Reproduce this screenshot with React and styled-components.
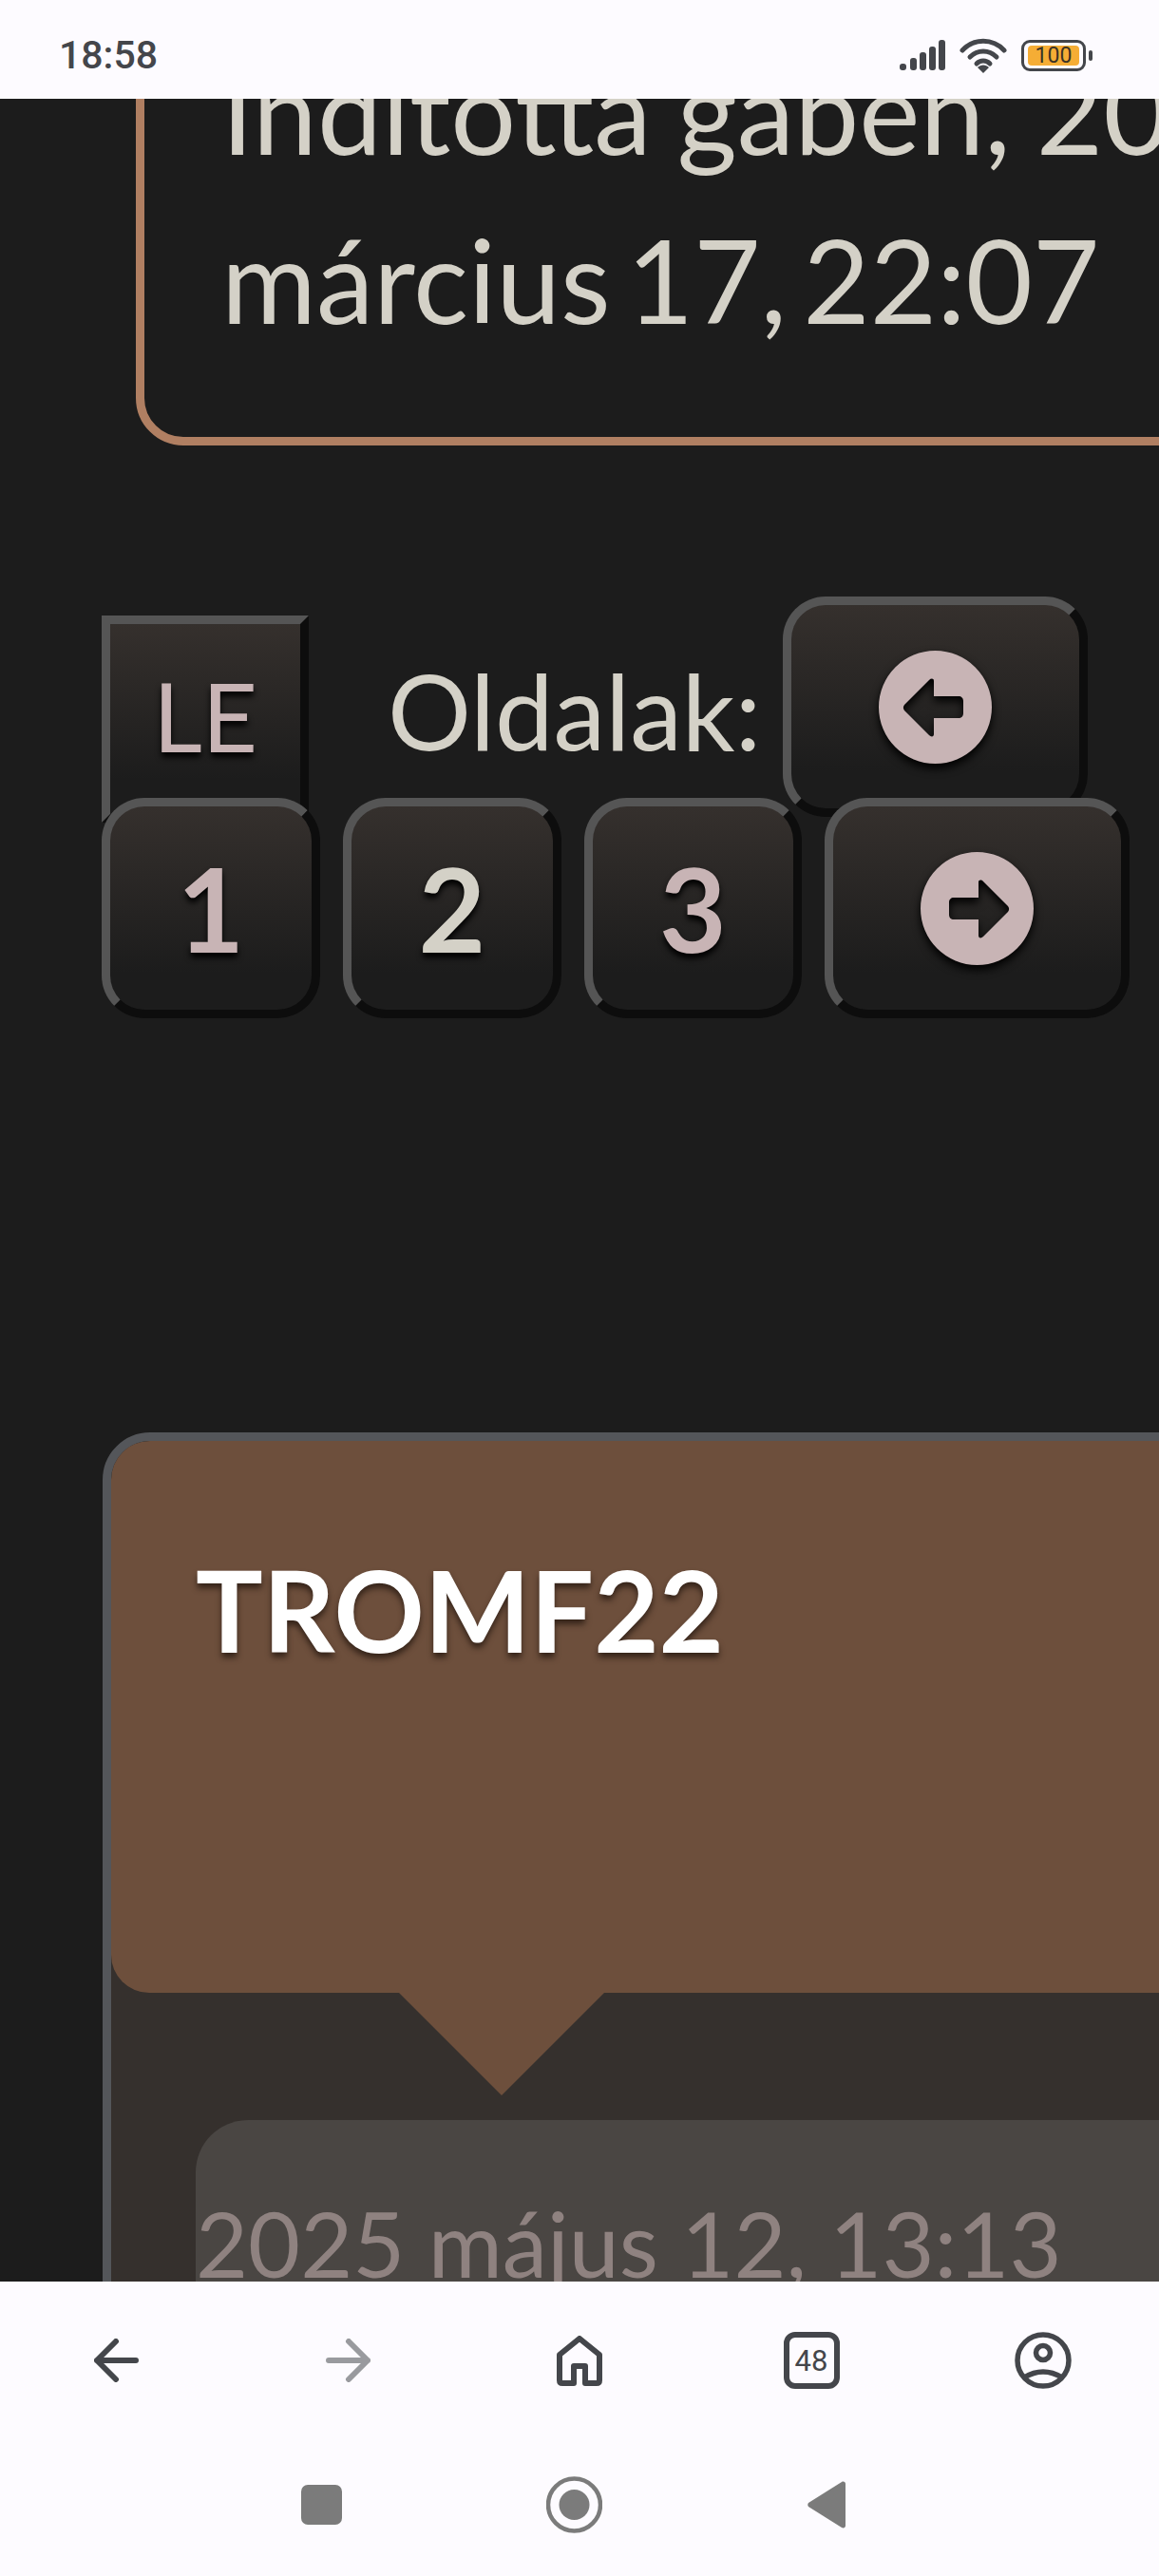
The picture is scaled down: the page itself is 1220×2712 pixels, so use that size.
import React from 'react'
import styled, { createGlobalStyle } from 'styled-components'

const GlobalStyle = createGlobalStyle`
  html, body {
    margin: 0;
    padding: 0;
    background: #1c1c1c;
  }
  * {
    box-sizing: border-box;
  }
`

const Screen = styled.div`
  width: 1220px;
  height: 2712px;
  display: flex;
  flex-direction: column;
  overflow: hidden;
  font-family: Lato, sans-serif;
  background: #1c1c1c;
`

const StatusBar = styled.div`
  flex: 0 0 104px;
  display: flex;
  align-items: center;
  justify-content: space-between;
  padding: 12px 77px 0 62px;
  background: #fdfbff;
  position: relative;
  z-index: 2;
`

const Clock = styled.span`
  font-family: Roboto, sans-serif;
  font-weight: 500;
  font-size: 41px;
  color: #44464b;
`

const StatusIcons = styled.div`
  display: flex;
  align-items: center;
  gap: 15px;
`

const Battery = styled.div`
  width: 68px;
  height: 33px;
  border: 3px solid #44464b;
  border-radius: 9px;
  padding: 3px 4px;
  position: relative;
  display: flex;

  &::after {
    content: '';
    position: absolute;
    right: -10px;
    top: 8px;
    width: 4px;
    height: 11px;
    border-radius: 2px;
    background: #44464b;
  }
`

const BatteryFill = styled.div`
  flex: 1;
  background: #f5ad35;
  border-radius: 4px;
  display: flex;
  align-items: center;
  justify-content: center;
  font-family: Roboto, sans-serif;
  font-size: 23px;
  line-height: 1;
  color: #3a3226;
`

const Content = styled.div`
  flex: 1;
  min-height: 0;
  overflow: hidden;
`

const TopicCard = styled.div`
  width: 1400px;
  margin: -110px 0 0 143px;
  height: 475px;
  padding: 24px 0 0 81px;
  border: 9px solid #b07f62;
  border-radius: 50px;
  color: #d4d1c7;
  font-size: 121.500px;
  line-height: 178px;
  white-space: nowrap;
`

const TopicLine = styled.div`
  word-spacing: ${({ $tight }) => $tight ? '-14px' : '-4px'};
`

const PagerRow = styled.div`
  display: flex;
  align-items: flex-start;
  padding-left: 107px;
`

const TopRow = styled(PagerRow)`
  margin-top: 159px;
  height: 212px;
`

const BottomRow = styled(PagerRow)`
  gap: 24px;
  position: relative;
`

const KeyButton = styled.div`
  width: ${({ $w }) => $w}px;
  height: 232px;
  flex: none;
  display: flex;
  align-items: center;
  justify-content: center;
  border: 9px solid;
  border-color: #555 #0d0d0d #0d0d0d #555;
  border-radius: 45px;
  background: linear-gradient(#35302d, #1c1c1c 82%);
  color: ${({ $light }) => $light ? '#d4d1c7' : '#c8b4b5'};
  font-size: 122px;
  font-weight: 700;
  text-shadow: 0 5px 6px #000;
`

const LeButton = styled(KeyButton)`
  width: 218px;
  height: 218px;
  margin-top: 20px;
  padding-bottom: 8px;
  border-radius: 0;
  font-size: 101px;
  font-weight: 400;
`

const PrevButton = styled(KeyButton)`
  margin-left: 24px;
`

const PagerLabel = styled.span`
  margin: 53px 0 0 83px;
  width: 392px;
  flex: none;
  color: #d4d1c7;
  font-size: 110px;
  line-height: 132px;
  white-space: nowrap;
`

const ArrowDisc = styled.svg`
  width: 119px;
  height: 119px;
  filter: drop-shadow(0 5px 5px #000);
`

const PostCard = styled.div`
  width: 1400px;
  height: 1100px;
  margin: 436px 0 0 108px;
  border: 9px solid #54565a;
  border-radius: 50px;
  background: #35302d;
  overflow: hidden;
`

const PostHeader = styled.div`
  height: 581px;
  position: relative;
  padding: 106px 0 0 89px;
  background: #6d4f3c;
  border-radius: 40px;
  color: #fff;
  font-size: 118px;
  line-height: 144px;
  font-weight: 700;
  text-shadow: 0 5px 6px #35241a;

  &::after {
    content: '';
    position: absolute;
    top: 100%;
    left: 303px;
    border-style: solid;
    border-width: 108px 108px 0;
    border-color: #6d4f3c transparent transparent;
  }
`

const PostBody = styled.div`
  margin: 134px 0 0 89px;
  height: 500px;
  background: #4a4643;
  border-radius: 55px;
  padding-top: 73px;
  color: #8f8280;
  font-size: 95px;
  line-height: 112px;
  white-space: nowrap;
`

const BrowserBar = styled.div`
  flex: 0 0 310px;
  background: #fdfbff;
  position: relative;
  z-index: 2;
`

const Toolbar = styled.div`
  display: grid;
  grid-template-columns: repeat(5, 244px);
  height: 140px;
  padding-top: 33px;
`

const ToolSlot = styled.div`
  display: flex;
  align-items: center;
  justify-content: center;
  height: 100px;
`

const NavRow = styled.div`
  display: grid;
  grid-template-columns: repeat(3, 266px);
  justify-content: center;
  margin: 60px 0 0 -12px;
`

const NavSlot = styled.div`
  display: flex;
  justify-content: center;
  align-items: center;
  height: 70px;
`

const TabCount = styled.div`
  width: 59px;
  height: 60px;
  border: 6px solid #44464b;
  border-radius: 12px;
  display: flex;
  align-items: center;
  justify-content: center;
  font-family: Roboto, sans-serif;
  font-size: 31px;
  font-weight: 400;
  color: #44464b;
`

const NavSquare = styled.div`
  width: 43px;
  height: 42px;
  border-radius: 7px;
  background: #7b7b7b;
`

function SignalIcon() {
  return (
    <svg width="48" height="32" viewBox="0 0 48 32" fill="#44464b">
      <rect x="0" y="25" width="7" height="7" rx="3" />
      <rect x="11" y="19" width="7" height="13" rx="3" />
      <rect x="21" y="13" width="7" height="19" rx="3" />
      <rect x="31" y="7" width="7" height="25" rx="3" />
      <rect x="41" y="0" width="7" height="32" rx="3" />
    </svg>
  )
}

function WifiIcon() {
  return (
    <svg width="50" height="37" viewBox="0 0 50 37" fill="none" stroke="#44464b" strokeWidth="5" strokeLinecap="round">
      <path d="M3 13C15 0 35 0 47 13" />
      <path d="M11 20C19 12 31 12 39 20" />
      <path d="M18 27C22 23 28 23 32 27" />
      <path d="M19 31L25 37L31 31C28 27.500 22 27.500 19 31Z" fill="#44464b" stroke="none" />
    </svg>
  )
}

function Disc({ flip }) {
  const d = flip
    ? 'M61 32C61 29 64 29 66 31L92 57C93.500 59 93.500 61 92 63L66 89C64 91 61 91 61 88L61 71L35 71C32 71 30 69 30 66L30 53C30 50 32 48 35 48L61 48Z'
    : 'M58 32C58 29 55 29 53 31L27 57C25.500 59 25.500 61 27 63L53 89C55 91 58 91 58 88L58 71L84 71C87 71 89 69 89 66L89 53C89 50 87 48 84 48L58 48Z'
  return (
    <ArrowDisc viewBox="0 0 119 119">
      <path fillRule="evenodd" fill="#c8b4b5" d={`M59.500 0A59.500 59.500 0 1 0 59.500 119A59.500 59.500 0 1 0 59.500 0Z${d}`} />
    </ArrowDisc>
  )
}

function BackArrow({ color, flip }) {
  return (
    <svg width="47" height="46" viewBox="0 0 47 46" fill="none" stroke={color} strokeWidth="6" strokeLinecap="round" strokeLinejoin="round">
      {flip
        ? <path d="M3 23H44M24 3L44 23L24 43" />
        : <path d="M44 23H3M23 3L3 23L23 43" />}
    </svg>
  )
}

function HomeIcon() {
  return (
    <svg width="48" height="53" viewBox="0 0 48 53" fill="none" stroke="#44464b" strokeWidth="6" strokeLinejoin="round">
      <path d="M18 50V32H30V50H42Q45 50 45 47V20L24 3L3 20V47Q3 50 6 50Z" />
    </svg>
  )
}

function ProfileIcon() {
  return (
    <svg width="60" height="60" viewBox="0 0 60 60" fill="none" stroke="#44464b" strokeWidth="5.500">
      <circle cx="30" cy="30" r="27" />
      <circle cx="30" cy="22" r="7.500" />
      <path d="M10 48Q30 36 50 48" />
    </svg>
  )
}

function HomeButton() {
  return (
    <svg width="59" height="60" viewBox="0 0 59 60">
      <circle cx="29.500" cy="30" r="27.500" fill="none" stroke="#7b7b7b" strokeWidth="4.500" />
      <circle cx="29.500" cy="30" r="16" fill="#7b7b7b" />
    </svg>
  )
}

function NavBack() {
  return (
    <svg width="40" height="50" viewBox="0 0 40 50" fill="#7b7b7b">
      <path d="M1 23L36 1C38 0 40 1 40 3V47C40 49 38 50 36 49L1 27C0 26 0 24 1 23Z" />
    </svg>
  )
}

export default function App() {
  return (
    <Screen>
      <GlobalStyle />
      <StatusBar>
        <Clock>18:58</Clock>
        <StatusIcons>
          <SignalIcon />
          <WifiIcon />
          <Battery>
            <BatteryFill>100</BatteryFill>
          </Battery>
        </StatusIcons>
      </StatusBar>

      <Content>
        <TopicCard>
          <TopicLine>Indította gaben, 2025.</TopicLine>
          <TopicLine $tight>március 17, 22:07</TopicLine>
        </TopicCard>

        <TopRow>
          <LeButton>LE</LeButton>
          <PagerLabel>Oldalak:</PagerLabel>
          <PrevButton $w={321}><Disc /></PrevButton>
        </TopRow>
        <BottomRow>
          <KeyButton $w={230}>1</KeyButton>
          <KeyButton $w={230} $light>2</KeyButton>
          <KeyButton $w={229}>3</KeyButton>
          <KeyButton $w={321}><Disc flip /></KeyButton>
        </BottomRow>

        <PostCard>
          <PostHeader>TROMF22</PostHeader>
          <PostBody>2025 május 12, 13:13</PostBody>
        </PostCard>
      </Content>

      <BrowserBar>
        <Toolbar>
          <ToolSlot><BackArrow color="#44464b" /></ToolSlot>
          <ToolSlot><BackArrow color="#999a9e" flip /></ToolSlot>
          <ToolSlot><HomeIcon /></ToolSlot>
          <ToolSlot><TabCount>48</TabCount></ToolSlot>
          <ToolSlot><ProfileIcon /></ToolSlot>
        </Toolbar>
        <NavRow>
          <NavSlot><NavSquare /></NavSlot>
          <NavSlot><HomeButton /></NavSlot>
          <NavSlot><NavBack /></NavSlot>
        </NavRow>
      </BrowserBar>
    </Screen>
  )
}
